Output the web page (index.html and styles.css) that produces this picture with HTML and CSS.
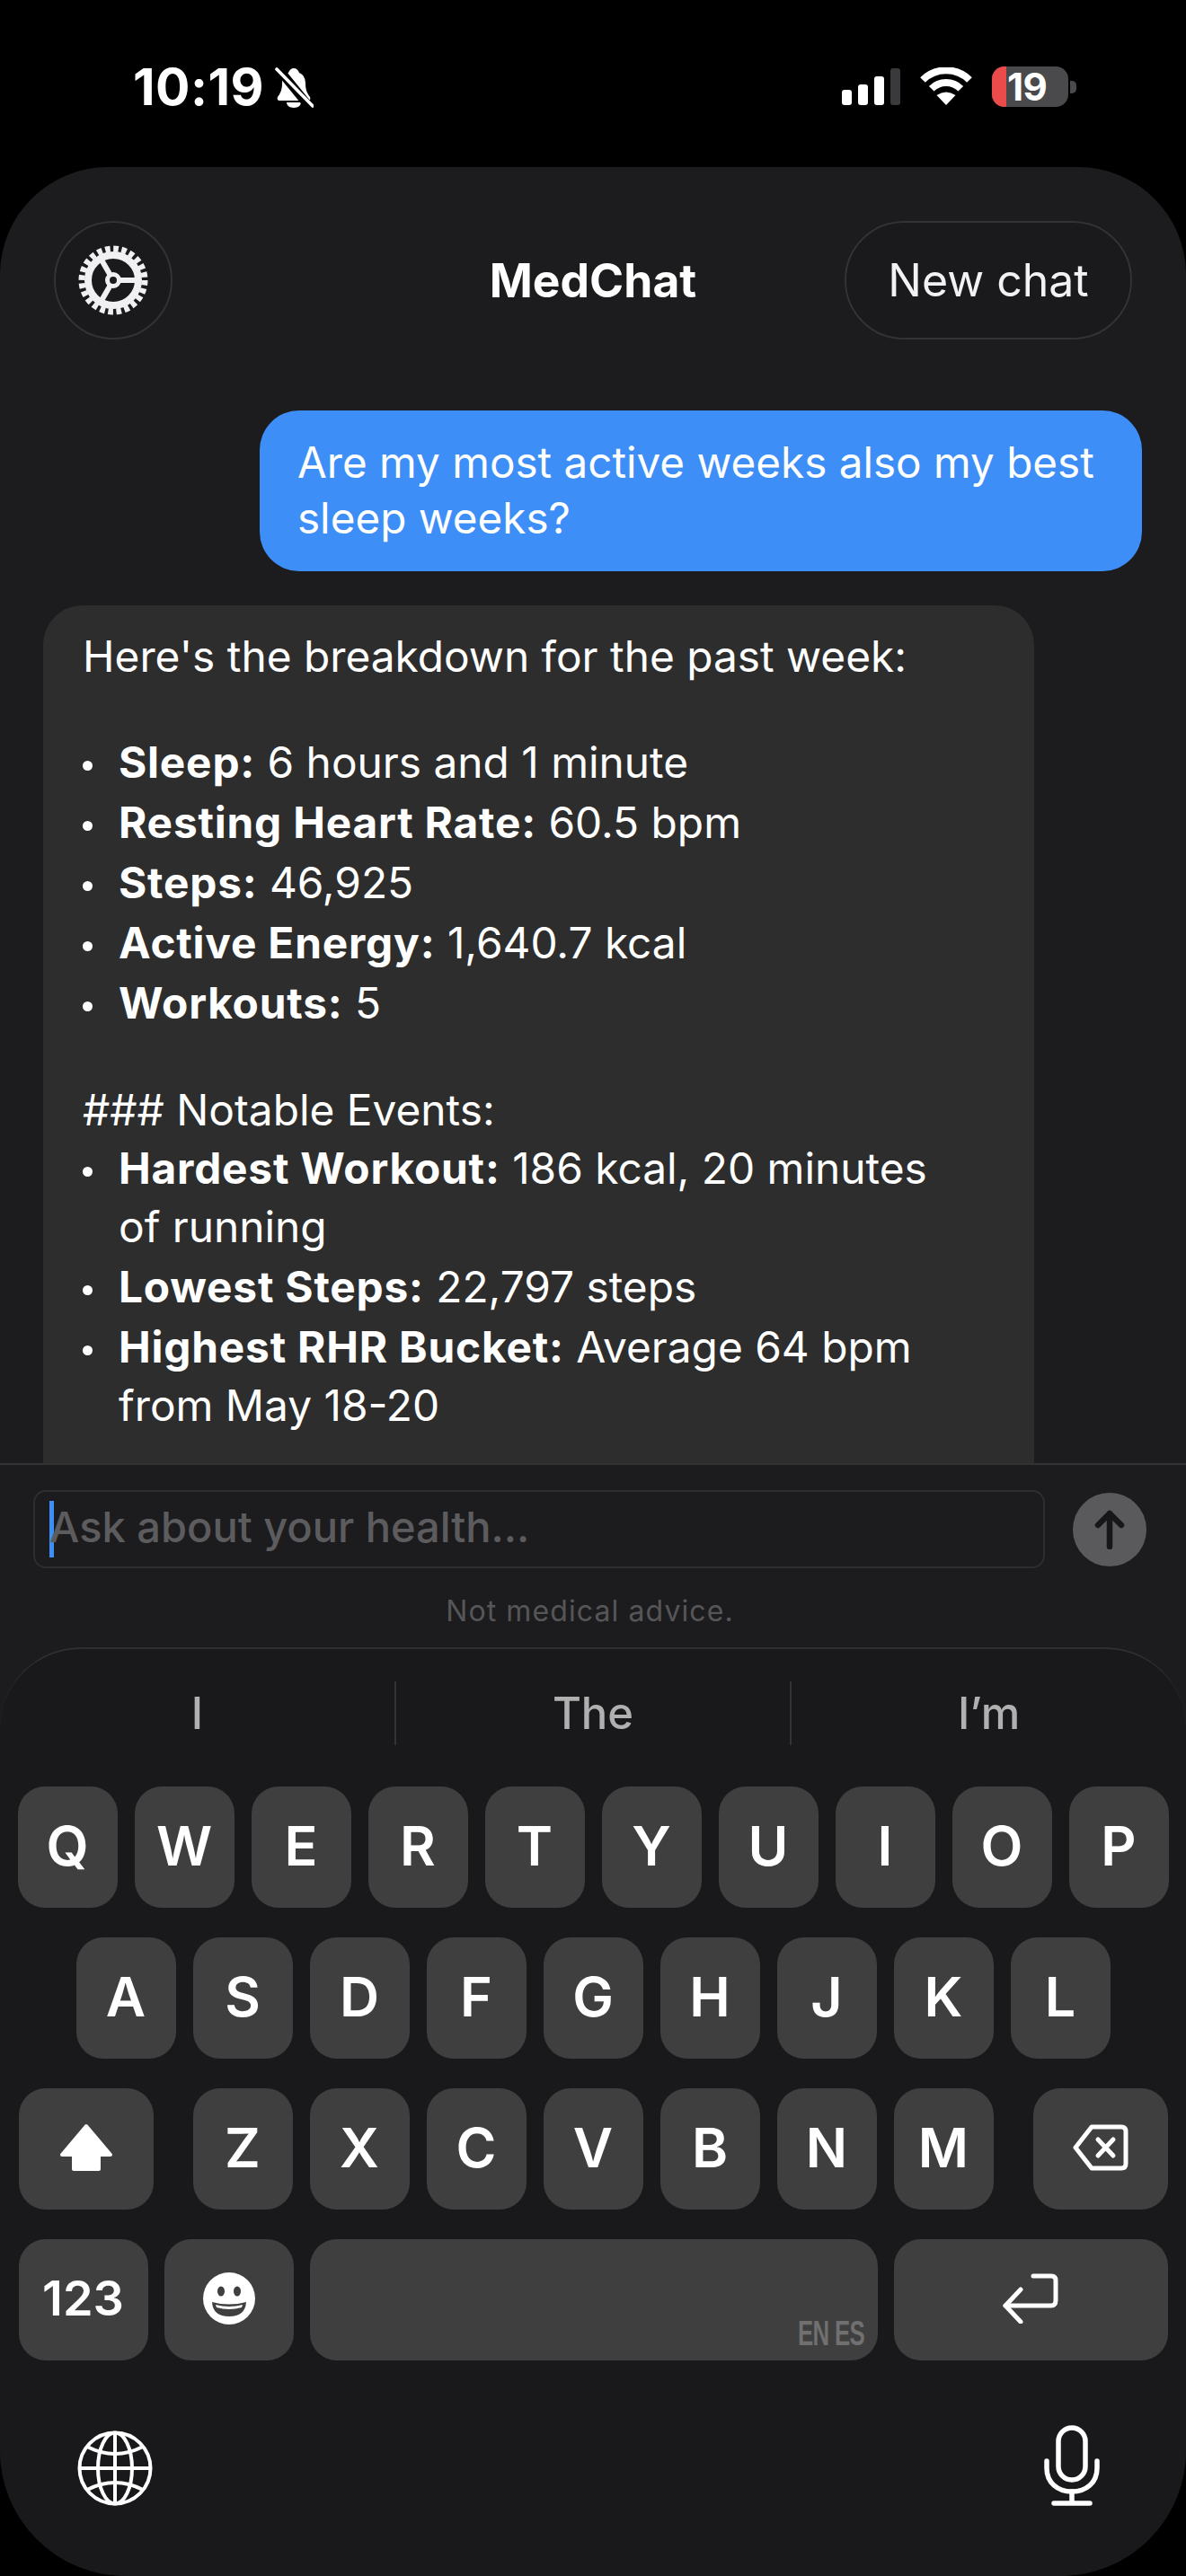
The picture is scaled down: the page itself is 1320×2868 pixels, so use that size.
FILE: index.html
```html
<!DOCTYPE html>
<html lang="en">
<head>
  <meta charset="UTF-8" />
  <meta name="viewport" content="width=device-width, initial-scale=1.0" />
  <title>MedChat</title>
  <link rel="stylesheet" href="styles.css">
</head>
<body>
  <!-- Status bar -->
  <div class="status-bar">
    <div class="status-left">
      <span class="clock">10:19</span>
      <svg class="bell" viewBox="0 0 44 45">
        <path fill="#fff" d="M22 1c3 0 5 2 6 5 5 2 7 7 7 12 0 7 2 11 5 15 1 2 0 4-2 4H6c-2 0-3-2-2-4 3-4 5-8 5-15 0-5 2-10 7-12 1-3 3-5 6-5z"/>
        <path fill="#fff" d="M14 39h16c0 3-3 6-8 6s-8-3-8-6z"/>
        <path stroke="#000" stroke-width="10" d="M2 -2 46 52"/>
        <path stroke="#fff" stroke-width="3.6" stroke-linecap="round" d="M3 2 43 43"/>
      </svg>
    </div>
    <div class="status-right">
      <div class="signal">
        <span class="bar bar-1"></span>
        <span class="bar bar-2"></span>
        <span class="bar bar-3"></span>
        <span class="bar bar-4"></span>
      </div>
      <svg class="wifi" viewBox="0 0 58 42">
        <path fill="none" stroke="#fff" stroke-width="8" d="M3 14A37 37 0 0 1 55 14"/>
        <path fill="none" stroke="#fff" stroke-width="8" d="M12.7 23.7A23 23 0 0 1 45.3 23.7"/>
        <path fill="#fff" d="M29 42 18.5 31Q29 24 39.5 31Z"/>
      </svg>
      <div class="battery">
        <div class="battery-body">
          <span class="battery-fill"></span>
          <span class="battery-level">19</span>
        </div>
        <span class="battery-nub"></span>
      </div>
    </div>
  </div>

  <div class="panel">
    <!-- Header -->
    <div class="chat-header">
      <button class="gear-button">
        <svg class="gear" viewBox="0 0 80 80" fill="none" stroke="#f0f0f2">
          <circle cx="40" cy="40" r="35" stroke-width="7" stroke-dasharray="5.6 3.56"/>
          <circle cx="40" cy="40" r="28" stroke-width="8"/>
          <path stroke-width="6" d="M40 40 67 40M40 40 26.5 16.6M40 40 26.5 63.4"/>
          <circle cx="40" cy="40" r="6.5" fill="#1a1a1c" stroke-width="5"/>
        </svg>
      </button>
      <div class="chat-title">MedChat</div>
      <button class="new-chat">New chat</button>
    </div>

    <!-- Messages -->
    <div class="thread">
      <div class="bubble bubble-user">Are my most active weeks also my best sleep weeks?</div>
      <div class="bubble bubble-bot">
        <p class="intro">Here's the breakdown for the past week:</p>
        <ul class="stats">
          <li><b>Sleep:</b> 6 hours and 1 minute</li>
          <li><b>Resting Heart Rate:</b> 60.5 bpm</li>
          <li><b>Steps:</b> 46,925</li>
          <li><b>Active Energy:</b> 1,640.7 kcal</li>
          <li><b>Workouts:</b> 5</li>
        </ul>
        <p class="section">### Notable Events:</p>
        <ul class="stats">
          <li><b>Hardest Workout:</b> 186 kcal, 20 minutes of running</li>
          <li><b>Lowest Steps:</b> 22,797 steps</li>
          <li><b>Highest RHR Bucket:</b> Average 64 bpm from May 18-20</li>
        </ul>
      </div>
    </div>

    <!-- Composer -->
    <div class="composer">
      <div class="composer-row">
        <div class="ask-input">
          <span class="caret"></span>
          <span class="placeholder">Ask about your health...</span>
        </div>
        <button class="send-button">
          <svg class="send-arrow" viewBox="0 0 36 44" fill="none" stroke="#17171a" stroke-width="6.5" stroke-linecap="round" stroke-linejoin="round">
            <path d="M18 41V4M5 17 18 4 31 17"/>
          </svg>
        </button>
      </div>
      <div class="disclaimer">Not medical advice.</div>
    </div>

    <!-- Keyboard -->
    <div class="keyboard">
      <div class="suggestions">
        <div class="suggestion">I</div>
        <div class="suggestion">The</div>
        <div class="suggestion">I’m</div>
      </div>
      <div class="key-rows">
        <div class="key-row">
          <div class="key">Q</div><div class="key">W</div><div class="key">E</div><div class="key">R</div><div class="key">T</div>
          <div class="key">Y</div><div class="key">U</div><div class="key">I</div><div class="key">O</div><div class="key">P</div>
        </div>
        <div class="key-row">
          <div class="key">A</div><div class="key">S</div><div class="key">D</div><div class="key">F</div><div class="key">G</div>
          <div class="key">H</div><div class="key">J</div><div class="key">K</div><div class="key">L</div>
        </div>
        <div class="key-row">
          <div class="key key-shift">
            <svg class="icon-shift" viewBox="0 0 62 54">
              <path fill="#fff" stroke="#fff" stroke-width="4" stroke-linejoin="round" d="M31 3 58 35H45V51H17V35H4Z"/>
            </svg>
          </div>
          <div class="key">Z</div><div class="key">X</div><div class="key">C</div><div class="key">V</div>
          <div class="key">B</div><div class="key">N</div><div class="key">M</div>
          <div class="key key-back">
            <svg class="icon-back" viewBox="0 0 62 52" fill="none" stroke="#fff" stroke-width="5" stroke-linecap="round" stroke-linejoin="round">
              <path d="M21 3H54Q59 3 59 8V44Q59 49 54 49H21L3 26Z"/>
              <path d="M28 17 45 35M45 17 28 35"/>
            </svg>
          </div>
        </div>
        <div class="key-row key-row-bottom">
          <div class="key key-num">123</div>
          <div class="key key-emoji">
            <svg class="icon-emoji" viewBox="0 0 58 58">
              <circle cx="29" cy="29" r="29" fill="#fff"/>
              <ellipse cx="20" cy="21" rx="4" ry="5.5" fill="#3f3f3f"/>
              <ellipse cx="38" cy="21" rx="4" ry="5.5" fill="#3f3f3f"/>
              <path fill="#3f3f3f" d="M10 33Q29 38 48 33Q47 49 29 49T10 33Z"/>
              <path fill="#fff" d="M14 36Q29 40 44 36L43 39Q29 43 15 39Z"/>
            </svg>
          </div>
          <div class="key key-space"><span class="lang">EN ES</span></div>
          <div class="key key-return">
            <svg class="icon-return" viewBox="0 0 62 56" fill="none" stroke="#fff" stroke-width="5" stroke-linecap="round" stroke-linejoin="round">
              <path d="M34 3H54Q59 3 59 8V30Q59 36 54 36H3"/>
              <path d="M20 18 3 36 20 54"/>
            </svg>
          </div>
        </div>
      </div>
      <div class="keyboard-bottom">
        <svg class="icon-globe" viewBox="0 0 84 84" fill="none" stroke="#fff" stroke-width="4">
          <circle cx="42" cy="42" r="39.5"/>
          <ellipse cx="42" cy="42" rx="19" ry="39.5"/>
          <path d="M42 2V82M2 42H82"/>
          <path d="M11 18Q42 34 73 18M11 66Q42 50 73 66"/>
        </svg>
        <svg class="icon-mic" viewBox="0 0 62 90" fill="none" stroke="#fff" stroke-width="5.5" stroke-linecap="round">
          <rect x="16" y="3" width="30" height="58" rx="15"/>
          <path d="M3 40V48C3 64 15 74 31 74S59 64 59 48V40"/>
          <path d="M31 74V87M11 87H51"/>
        </svg>
      </div>
    </div>
  </div>
</body>
</html>
```

FILE: styles.css
```css
/* General */
body {
  margin: 0;
  width: 1320px;
  height: 2868px;
  overflow: hidden;
  background: #000;
  color: #fff;
  font-family: Inter, "Liberation Sans", sans-serif;
  display: flex;
  flex-direction: column;
}

button {
  font-family: inherit;
  color: inherit;
  cursor: pointer;
}

/* Status bar */
.status-bar {
  height: 186px;
  flex-shrink: 0;
  display: flex;
  justify-content: space-between;
  align-items: flex-start;
  padding: 74px 122px 0 148px;
  box-sizing: border-box;
}

.status-left {
  display: flex;
  align-items: center;
  gap: 11px;
  height: 46px;
}

.clock {
  font-size: 57px;
  font-weight: 700;
  line-height: 68px;
  letter-spacing: 0.5px;
}

.bell {
  width: 44px;
  height: 45px;
}

.status-right {
  display: flex;
  align-items: flex-end;
  height: 45px;
}

.signal {
  display: flex;
  align-items: flex-end;
  gap: 7px;
  height: 41px;
  margin-bottom: 2px;
}

.bar {
  width: 11px;
  background: #fff;
  border-radius: 3px;
}

.bar-1 { height: 17px; }
.bar-2 { height: 23px; }
.bar-3 { height: 32px; }
.bar-4 { height: 41px; background: #3a3a3c; }

.wifi {
  width: 58px;
  height: 42px;
  margin: 0 22px 2px;
}

.battery {
  display: flex;
  align-items: center;
}

.battery-body {
  width: 85px;
  height: 45px;
  border-radius: 14px;
  background: #4a4a4c;
  display: flex;
  align-items: center;
}

.battery-fill {
  width: 16px;
  height: 100%;
  background: #ec4b4b;
  border-radius: 14px 0 0 14px;
}

.battery-level {
  margin-left: 1px;
  font-size: 42px;
  font-weight: 700;
  letter-spacing: -0.5px;
}

.battery-nub {
  width: 7px;
  height: 14px;
  margin-left: 2px;
  background: #4a4a4c;
  border-radius: 0 5px 5px 0;
}

/* Main panel */
.panel {
  flex: 1;
  min-height: 0;
  display: flex;
  flex-direction: column;
  background: #1c1c1e;
  border-radius: 120px 120px 140px 140px;
}

/* Header */
.chat-header {
  flex-shrink: 0;
  display: grid;
  grid-template-columns: 1fr auto 1fr;
  align-items: center;
  padding: 60px 60px 0 60px;
}

.gear-button {
  justify-self: start;
  width: 132px;
  height: 132px;
  padding: 0;
  border: 2px solid #333335;
  border-radius: 50%;
  background: #1a1a1c;
  display: flex;
  align-items: center;
  justify-content: center;
}

.gear {
  width: 80px;
  height: 80px;
}

.chat-title {
  font-size: 51.6px;
  font-weight: 700;
}

.new-chat {
  justify-self: end;
  width: 320px;
  height: 132px;
  padding: 0;
  border: 2px solid #333335;
  border-radius: 66px;
  background: #1a1a1c;
  color: #f2f2f4;
  font-size: 50px;
}

/* Messages */
.thread {
  flex: 1;
  min-height: 0;
  overflow: hidden;
  display: flex;
  flex-direction: column;
  padding: 79px 49px 0 48px;
  gap: 38px;
  font-size: 47.8px;
}

.bubble {
  flex-shrink: 0;
  box-sizing: border-box;
  border-radius: 44px;
}

.bubble-user {
  align-self: flex-end;
  width: 982px;
  padding: 27px 42px 28px;
  background: #3d8ef7;
  font-size: 47.6px;
  line-height: 62px;
}

.bubble-bot {
  width: 1103px;
  padding: 25px 64px 80px 44px;
  background: #2d2d2d;
  line-height: 65px;
}

.intro,
.section {
  margin: 0;
}

.intro {
  margin-bottom: 53px;
}

.section {
  margin-top: 54px;
}

.stats {
  margin: 0;
  padding: 0 0 0 40px;
  list-style: none;
}

.stats li {
  margin-bottom: 2px;
}

.stats li::before {
  content: "";
  display: inline-block;
  width: 11px;
  height: 11px;
  margin: 0 29px 0 -40px;
  border-radius: 50%;
  background: #fff;
  vertical-align: middle;
}

.stats b {
  font-weight: 700;
  letter-spacing: 0.8px;
}

/* Composer */
.composer {
  flex-shrink: 0;
  height: 205px;
  box-sizing: border-box;
  border-top: 2px solid #333335;
  padding: 28px 44px 0 37px;
}

.composer-row {
  display: flex;
  align-items: center;
  gap: 31px;
}

.ask-input {
  flex: 1;
  height: 87px;
  box-sizing: border-box;
  border: 2px solid #2e2e30;
  border-radius: 14px;
  padding-left: 16px;
  display: flex;
  align-items: center;
}

.caret {
  width: 5px;
  height: 63px;
  margin-right: -5px;
  background: #3d8ef7;
}

.placeholder {
  padding-bottom: 6px;
  color: #5c5c5e;
  font-size: 47px;
  font-weight: 500;
}

.send-button {
  flex-shrink: 0;
  width: 82px;
  height: 82px;
  padding: 0;
  border: none;
  border-radius: 50%;
  background: #5a5a5c;
  display: flex;
  align-items: center;
  justify-content: center;
}

.send-arrow {
  width: 36px;
  height: 44px;
}

.disclaimer {
  margin-top: 28px;
  color: #565658;
  font-size: 32px;
  text-align: center;
  letter-spacing: 1.1px;
}

/* Keyboard */
.keyboard {
  flex-shrink: 0;
  height: 1034px;
  box-sizing: border-box;
  background: #19191b;
  border-top: 2px solid #2f2f31;
  border-radius: 90px 90px 140px 140px;
  padding-top: 36px;
}

.suggestions {
  display: flex;
  height: 71px;
}

.suggestion {
  flex: 1;
  display: flex;
  align-items: center;
  justify-content: center;
  color: #b0b0b0;
  font-size: 49px;
  font-weight: 500;
}

.suggestion + .suggestion {
  border-left: 2px solid #333335;
}

.key-rows {
  display: flex;
  flex-direction: column;
  gap: 33px;
  margin-top: 46px;
}

.key-row {
  display: flex;
  justify-content: center;
  gap: 19px;
  height: 135px;
}

.key {
  width: 111px;
  flex-shrink: 0;
  box-sizing: border-box;
  padding-bottom: 4px;
  border-radius: 30px;
  background: #3f3f3f;
  display: flex;
  align-items: center;
  justify-content: center;
  font-size: 61px;
  font-weight: 600;
}

.key-shift {
  width: 150px;
  margin-right: 25px;
}

.key-back {
  width: 150px;
  margin-left: 25px;
}

.icon-shift {
  width: 62px;
  height: 54px;
}

.icon-back {
  width: 62px;
  height: 52px;
}

.key-row-bottom {
  gap: 18px;
}

.key-num,
.key-emoji {
  width: 144px;
}

.key-num {
  font-size: 54px;
}

.icon-emoji {
  width: 58px;
  height: 58px;
}

.key-space {
  width: 632px;
  align-items: flex-end;
  justify-content: flex-end;
  padding: 0 14px 14px 0;
}

.lang {
  color: #707070;
  font-family: "Liberation Sans", sans-serif;
  font-size: 38px;
  font-weight: 700;
  line-height: 32px;
  letter-spacing: -1px;
  transform: scaleX(0.68);
  transform-origin: right center;
}

.key-return {
  width: 305px;
}

.icon-return {
  width: 62px;
  height: 56px;
}

.keyboard-bottom {
  display: flex;
  justify-content: space-between;
  align-items: flex-end;
  padding: 72px 96px 0 86px;
}

.icon-globe {
  width: 84px;
  height: 84px;
}

.icon-mic {
  width: 62px;
  height: 90px;
}
```
